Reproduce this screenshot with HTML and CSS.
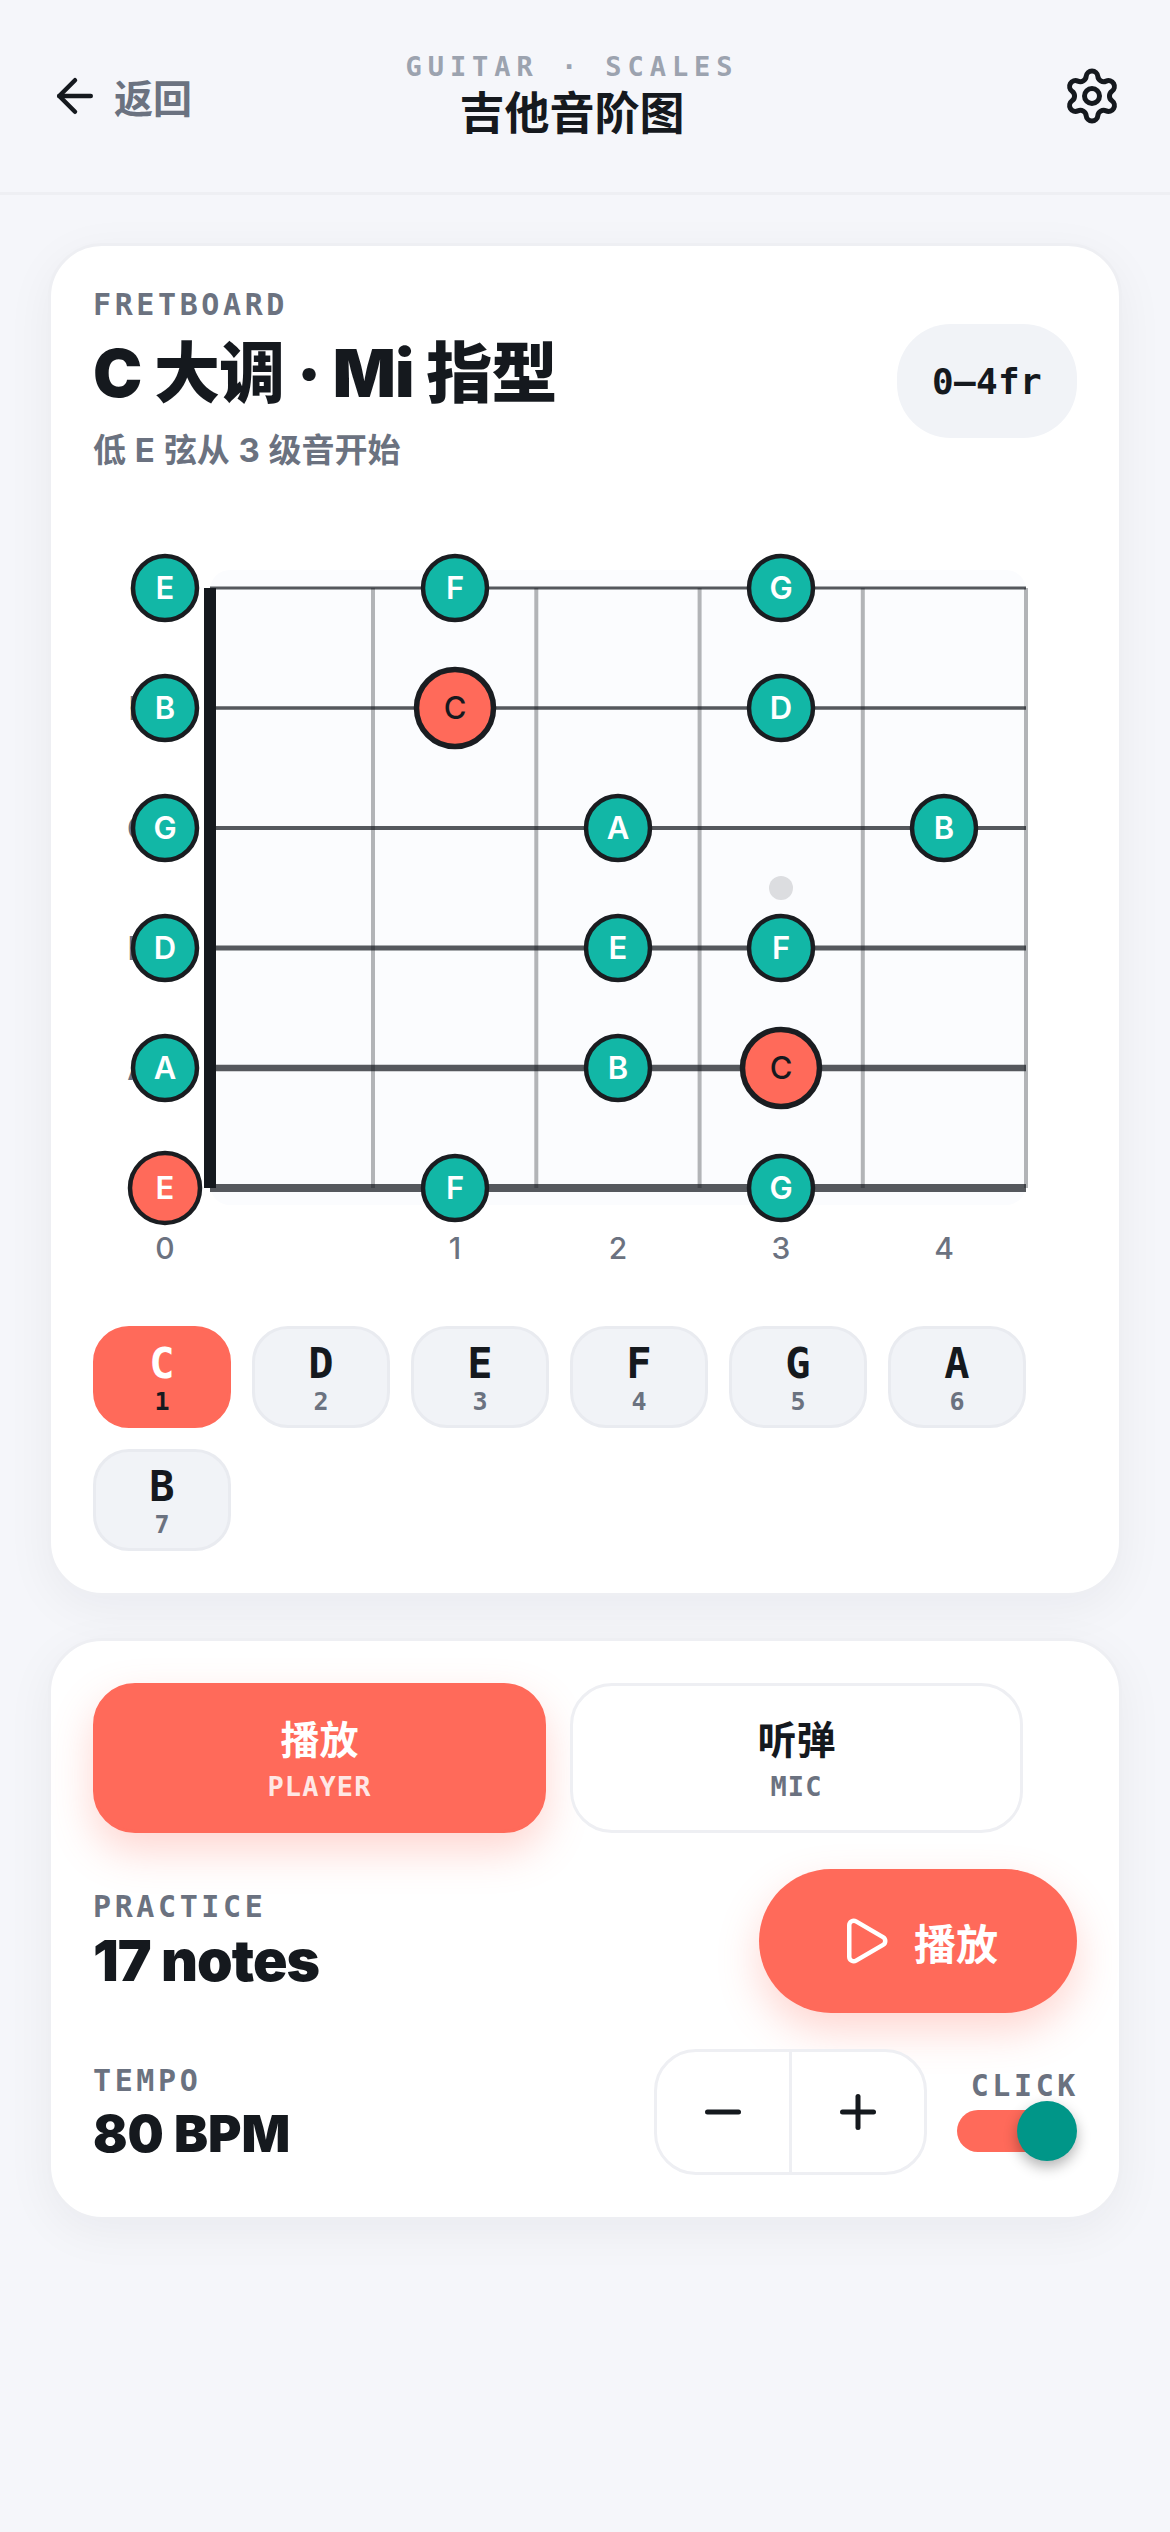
FILE: index.html
```html
<!DOCTYPE html>
<html lang="zh">
<head>
<meta charset="utf-8">
<title>吉他音阶图</title>
<link rel="stylesheet" href="styles.css">
</head>
<body>
<header class="topbar">
  <div class="back">
    <svg class="icon-back" viewBox="0 0 24 24"><path d="m12 19-7-7 7-7"/><path d="M19 12H5"/></svg>
    <span>返回</span>
  </div>
  <div class="top-title">
    <div class="eyebrow">GUITAR · SCALES</div>
    <h1>吉他音阶图</h1>
  </div>
  <svg class="icon-gear" viewBox="0 0 24 24"><path d="M9.671 4.136a2.34 2.34 0 0 1 4.659 0 2.34 2.34 0 0 0 3.319 1.915 2.34 2.34 0 0 1 2.33 4.033 2.34 2.34 0 0 0 0 3.831 2.34 2.34 0 0 1-2.33 4.033 2.34 2.34 0 0 0-3.319 1.915 2.34 2.34 0 0 1-4.659 0 2.34 2.34 0 0 0-3.32-1.915 2.34 2.34 0 0 1-2.33-4.033 2.34 2.34 0 0 0 0-3.831A2.34 2.34 0 0 1 6.35 6.051a2.34 2.34 0 0 0 3.319-1.915"/><circle cx="12" cy="12" r="3"/></svg>
</header>

<main class="page">
  <section class="card">
    <div class="card-head">
      <div>
        <div class="label">FRETBOARD</div>
        <h2>C 大调 · Mi 指型</h2>
        <p class="sub">低 E 弦从 3 级音开始</p>
      </div>
      <div class="badge">0–4fr</div>
    </div>

    <svg class="board" viewBox="93 520 984 760">
      <rect class="board-bg" x="210" y="570" width="816" height="635" rx="20"/>
      <g class="frets">
        <line x1="373" y1="588" x2="373" y2="1188"/>
        <line x1="536.3" y1="588" x2="536.3" y2="1188"/>
        <line x1="699.6" y1="588" x2="699.6" y2="1188"/>
        <line x1="862.8" y1="588" x2="862.8" y2="1188"/>
        <line x1="1026" y1="588" x2="1026" y2="1188"/>
      </g>
      <circle class="inlay" cx="781" cy="888" r="12"/>
      <g class="strings">
        <line class="s1" x1="210" y1="588" x2="1026" y2="588"/>
        <line class="s2" x1="210" y1="708" x2="1026" y2="708"/>
        <line class="s3" x1="210" y1="828" x2="1026" y2="828"/>
        <line class="s4" x1="210" y1="948" x2="1026" y2="948"/>
        <line class="s5" x1="210" y1="1068" x2="1026" y2="1068"/>
        <line class="s6" x1="210" y1="1188" x2="1026" y2="1188"/>
      </g>
      <rect class="nut" x="204" y="588" width="12" height="600"/>
      <g class="string-names">
        <text x="139" y="599">e</text>
        <text x="139" y="720">B</text>
        <text x="139" y="840">G</text>
        <text x="139" y="960">D</text>
        <text x="139" y="1080">A</text>
        <text x="139" y="1200">E</text>
      </g>
      <g class="notes">
        <circle cx="165" cy="588" r="32"/><text x="165" y="599">E</text>
        <circle cx="455" cy="588" r="32"/><text x="455" y="599">F</text>
        <circle cx="781" cy="588" r="32"/><text x="781" y="599">G</text>
        <circle cx="165" cy="708" r="32"/><text x="165" y="719">B</text>
        <circle cx="781" cy="708" r="32"/><text x="781" y="719">D</text>
        <circle cx="165" cy="828" r="32"/><text x="165" y="839">G</text>
        <circle cx="618" cy="828" r="32"/><text x="618" y="839">A</text>
        <circle cx="944" cy="828" r="32"/><text x="944" y="839">B</text>
        <circle cx="165" cy="948" r="32"/><text x="165" y="959">D</text>
        <circle cx="618" cy="948" r="32"/><text x="618" y="959">E</text>
        <circle cx="781" cy="948" r="32"/><text x="781" y="959">F</text>
        <circle cx="165" cy="1068" r="32"/><text x="165" y="1079">A</text>
        <circle cx="618" cy="1068" r="32"/><text x="618" y="1079">B</text>
        <circle cx="455" cy="1188" r="32"/><text x="455" y="1199">F</text>
        <circle cx="781" cy="1188" r="32"/><text x="781" y="1199">G</text>
      </g>
      <g class="roots">
        <circle cx="455" cy="708" r="38.5"/><text x="455" y="719">C</text>
        <circle cx="781" cy="1068" r="38.5"/><text x="781" y="1079">C</text>
      </g>
      <g class="open-root">
        <circle cx="165" cy="1188" r="35"/><text x="165" y="1199">E</text>
      </g>
      <g class="fret-nums">
        <text x="165" y="1259">0</text>
        <text x="455" y="1259">1</text>
        <text x="618" y="1259">2</text>
        <text x="781" y="1259">3</text>
        <text x="944" y="1259">4</text>
      </g>
    </svg>

    <div class="chips">
      <div class="chip active"><b>C</b><span>1</span></div>
      <div class="chip"><b>D</b><span>2</span></div>
      <div class="chip"><b>E</b><span>3</span></div>
      <div class="chip"><b>F</b><span>4</span></div>
      <div class="chip"><b>G</b><span>5</span></div>
      <div class="chip"><b>A</b><span>6</span></div>
      <div class="chip"><b>B</b><span>7</span></div>
    </div>
  </section>

  <section class="card">
    <div class="segments">
      <div class="segment active"><b>播放</b><span>PLAYER</span></div>
      <div class="segment"><b>听弹</b><span>MIC</span></div>
    </div>

    <div class="row">
      <div class="stat">
        <div class="label">PRACTICE</div>
        <div class="value">17 notes</div>
      </div>
      <div class="play">
        <svg class="icon-play" viewBox="0 0 24 24"><path d="M5 5a2 2 0 0 1 3.008-1.728l11.997 6.998a2 2 0 0 1 .003 3.458l-12 7A2 2 0 0 1 5 19z"/></svg>
        <span>播放</span>
      </div>
    </div>

    <div class="row">
      <div class="stat stat-tempo">
        <div class="label">TEMPO</div>
        <div class="value">80 BPM</div>
      </div>
      <div class="tempo-controls">
        <div class="stepper">
          <div class="step"><svg class="icon-step" viewBox="0 0 36 36"><path d="M2.5 18h31"/></svg></div>
          <div class="step"><svg class="icon-step" viewBox="0 0 36 36"><path d="M2.5 18h31"/><path d="M18 2.5v31"/></svg></div>
        </div>
        <div class="click">
          <div class="label">CLICK</div>
          <div class="track"><div class="thumb"></div></div>
        </div>
      </div>
    </div>
  </section>
</main>
</body>
</html>
```
FILE: styles.css
```css
* { box-sizing: border-box; }
html, body { margin: 0; padding: 0; }
body {
  width: 1170px;
  min-height: 2532px;
  background: #f5f6fa;
  color: #15191e;
  font-family: Inter, "Noto Sans CJK SC", sans-serif;
}

.topbar {
  height: 195px;
  padding: 0 48px;
  border-bottom: 3px solid #eeeff3;
  display: grid;
  grid-template-columns: 299px 450px 1fr;
  align-items: start;
}
.back {
  display: flex;
  align-items: center;
  gap: 12px;
  margin-top: 69px;
  color: #6b7280;
  font-family: "Noto Sans CJK SC", sans-serif;
  font-weight: 700;
  font-size: 39px;
  line-height: 54px;
}
.icon-back {
  width: 54px;
  height: 54px;
  fill: none;
  stroke: #15191e;
  stroke-width: 2;
  stroke-linecap: round;
  stroke-linejoin: round;
}
.top-title { text-align: center; margin-top: 49px; }
.eyebrow {
  font-family: "DejaVu Sans Mono", monospace;
  font-weight: 700;
  font-size: 27px;
  line-height: 35px;
  letter-spacing: 5.94px;
  color: #9ca3af;
}
h1 {
  margin: 0;
  font-family: "Noto Sans CJK SC", sans-serif;
  font-weight: 700;
  font-size: 45px;
  line-height: 54px;
}
.icon-gear {
  justify-self: end;
  width: 60px;
  height: 60px;
  margin-top: 66px;
  fill: none;
  stroke: #15191e;
  stroke-width: 2;
  stroke-linecap: round;
  stroke-linejoin: round;
}

.page {
  padding: 48px 48px 0;
  display: flex;
  flex-direction: column;
  gap: 42px;
}
.card {
  background: #fff;
  border: 3px solid #eeeff3;
  border-radius: 54px;
  padding: 42px;
  box-shadow: 0 12px 48px rgba(21, 25, 30, 0.05);
}

.card-head {
  display: flex;
  justify-content: space-between;
  align-items: center;
}
.label {
  font-family: "DejaVu Sans Mono", monospace;
  font-weight: 700;
  font-size: 30px;
  line-height: 33px;
  letter-spacing: 3.6px;
  color: #6b7280;
}
h2 {
  margin: 0;
  font-weight: 900;
  font-size: 66px;
  line-height: 105px;
  letter-spacing: -0.8px;
  font-family: Inter, "Noto Sans CJK SC", sans-serif;
}
.sub {
  margin: 0;
  font-weight: 700;
  font-size: 33px;
  line-height: 48px;
  word-spacing: 1px;
  color: #6b7280;
}
.badge {
  width: 180px;
  height: 114px;
  border-radius: 54px;
  background: #f1f3f7;
  display: flex;
  align-items: center;
  justify-content: center;
  font-family: "DejaVu Sans Mono", monospace;
  font-weight: 700;
  font-size: 36px;
  letter-spacing: 0.3px;
}

.board {
  display: block;
  width: 984px;
  height: 760px;
  margin-top: 46px;
}
.board-bg { fill: #fbfcfe; }
.frets line { stroke: #b2b4b7; stroke-width: 4; }
.inlay { fill: #dcdde0; }
.strings line { stroke: #15191e; stroke-opacity: 0.72; }
.s1 { stroke-width: 3; }
.s2 { stroke-width: 3.6; }
.s3 { stroke-width: 4.2; }
.s4 { stroke-width: 5; }
.s5 { stroke-width: 6.5; }
.s6 { stroke-width: 8; }
.nut { fill: #15191e; }
.string-names text {
  fill: #6b7280;
  font-size: 32px;
  font-weight: 600;
  text-anchor: middle;
}
.notes circle { fill: #12b7a6; stroke: #1a1d21; stroke-width: 4.5; }
.notes text, .open-root text {
  fill: #fff;
  font-size: 31px;
  font-weight: 600;
  text-anchor: middle;
}
.roots circle { fill: #ff6a5a; stroke: #1a1d21; stroke-width: 5.5; }
.roots text {
  fill: #15191e;
  font-size: 31px;
  font-weight: 500;
  text-anchor: middle;
}
.open-root circle { fill: #ff6a5a; stroke: #1a1d21; stroke-width: 4.5; }
.fret-nums text {
  fill: #6b7280;
  font-size: 30px;
  font-weight: 500;
  text-anchor: middle;
}

.chips {
  display: flex;
  flex-wrap: wrap;
  gap: 21px;
  margin-top: 46px;
}
.chip {
  width: 138px;
  height: 102px;
  padding-top: 3px;
  border-radius: 36px;
  border: 3px solid #e9ebf0;
  background: #f1f3f7;
  display: flex;
  flex-direction: column;
  align-items: center;
  justify-content: center;
  font-family: "DejaVu Sans Mono", monospace;
}
.chip b { font-size: 42px; line-height: 46px; font-weight: 700; }
.chip span { font-size: 25px; line-height: 30px; font-weight: 700; color: #6b7280; }
.chip.active { background: #ff6a5a; border-color: #ff6a5a; }
.chip.active b { color: #fff; }
.chip.active span { color: #15191e; }

.segments {
  display: grid;
  grid-template-columns: 453px 453px;
  gap: 24px;
}
.segment {
  height: 150px;
  border-radius: 42px;
  border: 3px solid #eeeff3;
  background: #fff;
  display: flex;
  flex-direction: column;
  align-items: center;
  justify-content: center;
}
.segment b {
  font-family: "Noto Sans CJK SC", sans-serif;
  font-size: 39px;
  line-height: 54px;
  font-weight: 700;
}
.segment span {
  font-family: "DejaVu Sans Mono", monospace;
  font-size: 27px;
  line-height: 38px;
  padding-top: 4px;
  letter-spacing: 1.1px;
  font-weight: 700;
  color: #6b7280;
}
.segment.active {
  background: #ff6a5a;
  border-color: #ff6a5a;
  color: #fff;
  box-shadow: 0 18px 42px rgba(255, 106, 90, 0.28);
}
.segment.active span { color: rgba(255, 255, 255, 0.85); }

.row {
  display: flex;
  justify-content: space-between;
  align-items: center;
  margin-top: 36px;
}
.stat { padding-top: 5px; }
.stat-tempo { padding-top: 10px; }
.value {
  font-weight: 900;
  font-size: 57px;
  line-height: 75px;
  letter-spacing: -1px;
}
.stat-tempo .value { font-size: 51px; line-height: 74px; letter-spacing: 0; }
.play {
  width: 318px;
  height: 144px;
  border-radius: 72px;
  background: #ff6a5a;
  color: #fff;
  display: flex;
  align-items: center;
  justify-content: center;
  gap: 22px;
  box-shadow: 0 18px 42px rgba(255, 106, 90, 0.28);
  font-family: "Noto Sans CJK SC", sans-serif;
  font-weight: 700;
  font-size: 42px;
}
.icon-play {
  width: 54px;
  height: 54px;
  fill: none;
  stroke: #fff;
  stroke-width: 2;
  stroke-linecap: round;
  stroke-linejoin: round;
}

.tempo-controls { display: flex; align-items: center; gap: 30px; }
.stepper {
  display: flex;
  width: 273px;
  height: 126px;
  border: 3px solid #eeeff3;
  border-radius: 42px;
  background: #fff;
}
.step {
  flex: 1;
  display: flex;
  align-items: center;
  justify-content: center;
}
.step + .step { border-left: 3px solid #eeeff3; }
.icon-step {
  width: 36px;
  height: 36px;
  fill: none;
  stroke: #15191e;
  stroke-width: 5;
  stroke-linecap: round;
}
.click {
  width: 120px;
  display: flex;
  flex-direction: column;
  gap: 8px;
  align-items: flex-start;
  margin-bottom: 4px;
}
.click .label { align-self: flex-end; margin-right: -2px; }
.track {
  position: relative;
  width: 102px;
  height: 42px;
  border-radius: 21px;
  background: #ff6a5a;
}
.thumb {
  position: absolute;
  right: -18px;
  top: -9px;
  width: 60px;
  height: 60px;
  border-radius: 50%;
  background: #009688;
  box-shadow: 0 6px 14px rgba(0, 0, 0, 0.3);
}
```
